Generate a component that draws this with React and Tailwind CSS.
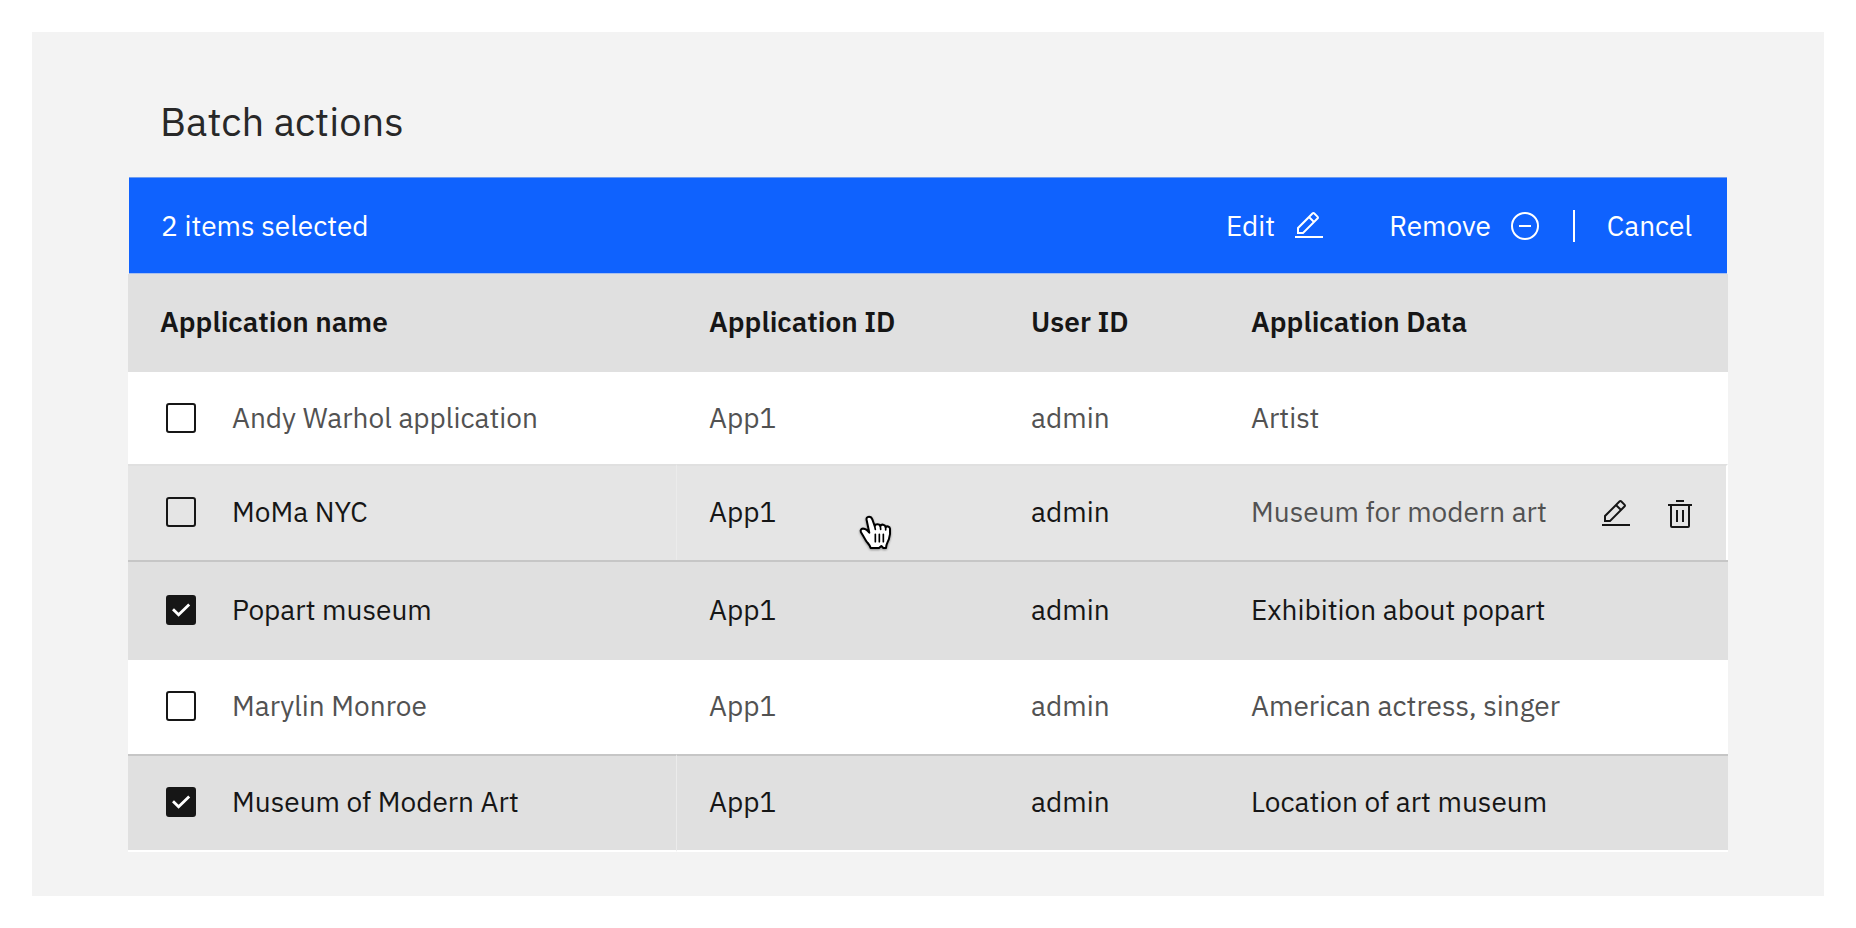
import { useState } from "react";

const FIRST_ROWS = [
  {
    id: "warhol",
    name: "Andy Warhol application",
    appId: "App1",
    user: "admin",
    data: "Artist",
    row: "h-[92px] bg-white text-[#525252]",
    cell: "",
  },
  {
    id: "moma",
    name: "MoMa NYC",
    appId: "App1",
    user: "admin",
    data: "Museum for modern art",
    row: "h-24 bg-[#e5e5e5] text-[#161616]",
    cell: "border-t-2 border-t-[#e0e0e0] pb-0.5",
    divided: true,
    hovered: true,
  },
  {
    id: "popart",
    name: "Popart museum",
    appId: "App1",
    user: "admin",
    data: "Exhibition about popart",
    row: "h-[100px] bg-[#e0e0e0] text-[#161616]",
    cell: "border-t-2 border-t-[#c6c6c6] pb-0.5",
    checked: true,
  },
  {
    id: "monroe",
    name: "Marylin Monroe",
    appId: "App1",
    user: "admin",
    data: "American actress, singer",
    row: "h-[94px] bg-white text-[#525252]",
    cell: "pb-0.5",
  },
  {
    id: "modern-art",
    name: "Museum of Modern Art",
    appId: "App1",
    user: "admin",
    data: "Location of art museum",
    row: "h-[98px] bg-[#e0e0e0] text-[#161616]",
    cell: "border-t-2 border-t-[#c6c6c6] border-b-2 border-b-white pb-0.5",
    divided: true,
    checked: true,
  },
];

function EditIcon() {
  return (
    <svg className="size-8 shrink-0" viewBox="0 0 32 32" fill="currentColor" aria-hidden="true">
      <rect x="2" y="26" width="28" height="2" />
      <path d="M25.4 9c.8-.8.8-2 0-2.8l-3.6-3.6c-.8-.8-2-.8-2.8 0l-15 15V24h6.4l15-15zM20.4 4L24 7.6l-3 3L17.4 7l3-3zM6 22v-3.6l10-10 3.6 3.6-10 10H6z" />
    </svg>
  );
}

function RemoveIcon() {
  return (
    <svg className="size-8 shrink-0" viewBox="0 0 32 32" fill="none" stroke="currentColor" strokeWidth="2" aria-hidden="true">
      <circle cx="16" cy="16" r="13" />
      <path d="M10 16h12" />
    </svg>
  );
}

function TrashIcon() {
  return (
    <svg className="size-8 shrink-0" viewBox="0 0 32 32" fill="currentColor" aria-hidden="true">
      <rect x="12" y="12" width="2" height="12" />
      <rect x="18" y="12" width="2" height="12" />
      <path d="M4 6v2h2v20a2 2 0 0 0 2 2h16a2 2 0 0 0 2-2V8h2V6H4zm4 22V8h16v20H8z" />
      <rect x="12" y="2" width="8" height="2" />
    </svg>
  );
}

function HandPointer() {
  return (
    <svg
      className="pointer-events-none absolute top-12 left-[181px] size-9 drop-shadow-[0_1px_1px_rgba(0,0,0,0.4)]"
      viewBox="0 0 108 108"
      aria-hidden="true"
    >
      <path
        d="M33 8c-6 0-9 5-7 11l8 37c-4-4-7-9-13-11-5-2-11-1-13 4-1 5 3 9 6 14l10 17c4 7 12 12 14 22h25l7-6 6 6h8c0-12 6-18 9-28 4-10 4-19 3-30-1-7-10-9-13-4-2-10-13-10-16-4-3-7-15-7-17 0l-7-20c-2-6-5-8-10-8z"
        fill="#fff"
        stroke="#000"
        strokeWidth="6"
        strokeLinejoin="round"
      />
      <path
        d="M50 36l2 10M67 36l1 10M83 40v8M52 61v22M64 61v22M76 61v22"
        fill="none"
        stroke="#000"
        strokeWidth="5"
        strokeLinecap="round"
      />
    </svg>
  );
}

function RowCheckbox({ id, checked, onChange }) {
  return (
    <span className="grid size-[30px] shrink-0 place-items-center">
      <input
        id={id}
        type="checkbox"
        checked={checked}
        onChange={onChange}
        className="col-start-1 row-start-1 size-[30px] appearance-none rounded-[3px] border-2 border-[#161616] checked:bg-[#161616]"
      />
      {checked && (
        <svg
          className="pointer-events-none col-start-1 row-start-1 size-[30px] text-white"
          viewBox="0 0 30 30"
          fill="none"
          stroke="currentColor"
          strokeWidth="2.8"
          aria-hidden="true"
        >
          <path d="M7 14.2l5.6 5.6L23.2 9.6" />
        </svg>
      )}
    </span>
  );
}

export default function App() {
  const [selected, setSelected] = useState(() => FIRST_ROWS.filter((r) => r.checked).map((r) => r.id));
  const toggle = (id) => setSelected((s) => (s.includes(id) ? s.filter((x) => x !== id) : [...s, id]));

  return (
    <div className="bg-white p-8 font-['IBM_Plex_Sans','Noto_Sans',sans-serif] text-[28px] leading-9">
      <main className="bg-[#f3f3f3] px-24 pt-16 pb-11">
        <h1 className="px-8 pb-[30px] text-[40px] leading-[51px] text-[#282828]">Batch actions</h1>

        <div className="mr-px ml-px flex h-[97px] items-center border-t border-b border-t-[#6f9df0] border-b-[#a9c0ee] bg-[#0f62fe] pr-[35px] pl-8 text-white">
          <p className="grow">{selected.length} items selected</p>
          <button type="button" className="flex items-center gap-[18px]">
            Edit
            <EditIcon />
          </button>
          <button type="button" className="ml-16 flex items-center gap-[18px]">
            Remove
            <RemoveIcon />
          </button>
          <span className="mr-8 ml-8 h-8 w-0.5 bg-white" />
          <button type="button" onClick={() => setSelected([])}>
            Cancel
          </button>
        </div>

        <table className="w-full table-fixed border-separate border-spacing-0 text-left">
          <thead className="bg-[#e0e0e0] text-[#161616]">
            <tr className="h-[98px]">
              <th scope="col" className="w-[549px] border-b-2 border-b-[#e0e0e0] px-8 font-semibold">Application name</th>
              <th scope="col" className="w-[322px] border-b-2 border-b-[#e0e0e0] px-8 font-semibold">Application ID</th>
              <th scope="col" className="w-[220px] border-b-2 border-b-[#e0e0e0] px-8 font-semibold">User ID</th>
              <th scope="col" className="border-b-2 border-b-[#e0e0e0] px-8 font-semibold">Application Data</th>
            </tr>
          </thead>
          <tbody>
            {FIRST_ROWS.map((r) => (
              <tr key={r.id} className={r.row}>
                <td className={`pl-[38px] ${r.cell} ${r.divided ? "border-r border-r-[#ebebeb]" : ""}`}>
                  <label htmlFor={r.id} className="flex items-center gap-9">
                    <RowCheckbox id={r.id} checked={selected.includes(r.id)} onChange={() => toggle(r.id)} />
                    {r.name}
                  </label>
                </td>
                <td className={`relative px-8 ${r.cell}`}>
                  {r.appId}
                  {r.hovered && <HandPointer />}
                </td>
                <td className={`px-8 ${r.cell}`}>{r.user}</td>
                <td className={`pl-8 ${r.cell} ${r.hovered ? "border-r-2 border-r-white pr-[30px]" : "pr-8"}`}>
                  {r.hovered ? (
                    <div className="flex items-center justify-between text-[#525252]">
                      {r.data}
                      <span className="flex gap-8 pt-1 text-[#161616]">
                        <button type="button" aria-label={`Edit ${r.name}`}>
                          <EditIcon />
                        </button>
                        <button type="button" aria-label={`Delete ${r.name}`}>
                          <TrashIcon />
                        </button>
                      </span>
                    </div>
                  ) : (
                    r.data
                  )}
                </td>
              </tr>
            ))}
          </tbody>
        </table>
      </main>
    </div>
  );
}
